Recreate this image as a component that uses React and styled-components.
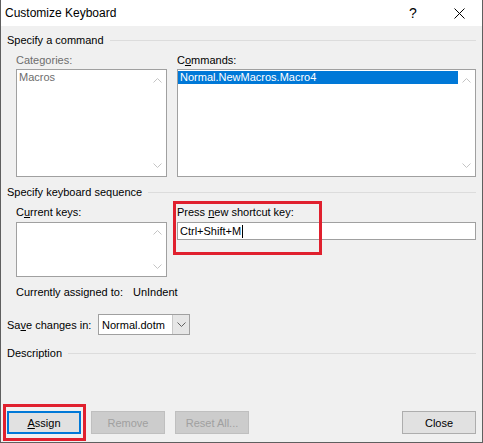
import styled, { createGlobalStyle } from "styled-components";

const GlobalStyle = createGlobalStyle`
  body {
    margin: 0;
    background: #ffffff;
  }
`;

const Window = styled.div`
  width: 483px;
  height: 443px;
  box-sizing: border-box;
  border: 1px solid #5f5f5f;
  border-top: none;
  display: flex;
  flex-direction: column;
  background: #f0f0f0;
  font-family: "Liberation Sans", Arial, sans-serif;
  font-size: 11px;
  color: #000;
`;

const TitleBar = styled.div`
  height: 26px;
  flex: none;
  display: flex;
  align-items: center;
  background: #ffffff;
  padding-left: 4px;
  font-size: 12px;
`;

const Title = styled.span`
  flex: 1;
`;

const TitleButton = styled.div`
  width: 46px;
  height: 26px;
  display: flex;
  align-items: center;
  justify-content: center;
  font-size: 14px;
`;

const Body = styled.div`
  flex: 1;
  display: flex;
  flex-direction: column;
  padding: 0 6px 8px 6px;
`;

const GroupHeader = styled.div`
  display: flex;
  align-items: center;
  gap: 6px;
  height: 14px;
  line-height: 14px;
  margin-top: ${({ $top }) => $top}px;
  &::after {
    content: "";
    flex: 1;
    border-top: 1px solid #dcdcdc;
  }
`;

const FieldGrid = styled.div`
  display: grid;
  grid-template-columns: 151px 1fr;
  column-gap: 10px;
  padding-left: 9px;
  margin-top: ${({ $top }) => $top}px;
`;

const Field = styled.div`
  position: relative;
  display: flex;
  flex-direction: column;
`;

const Label = styled.div`
  height: 14px;
  line-height: 14px;
  margin-bottom: ${({ $gap }) => $gap}px;
  color: ${({ $disabled }) => ($disabled ? "#6d6d6d" : "#000")};
`;

const U = styled.span`
  text-decoration: underline;
`;

const ListBox = styled.div`
  height: ${({ $h }) => $h}px;
  box-sizing: border-box;
  border: 1px solid #a0a0a0;
  background: #ffffff;
  display: flex;
`;

const Items = styled.div`
  flex: 1;
  padding-top: 1px;
`;

const Item = styled.div`
  height: 13px;
  line-height: 13px;
  padding-left: 2px;
  background: ${({ $selected }) => ($selected ? "#0078d7" : "transparent")};
  color: ${({ $selected, $disabled }) =>
    $selected ? "#fff" : $disabled ? "#6d6d6d" : "#000"};
`;

const ScrollBar = styled.div`
  width: 17px;
  display: flex;
  flex-direction: column;
  justify-content: space-between;
  align-items: center;
  padding: ${({ $pad }) => $pad}px 0;
`;

const TextInput = styled.div`
  height: 18px;
  box-sizing: border-box;
  border: 1px solid #a0a0a0;
  background: #ffffff;
  display: flex;
  align-items: center;
  padding-left: 2px;
`;

const Caret = styled.span`
  display: inline-block;
  width: 1px;
  height: 13px;
  background: #000;
  margin-left: 1px;
`;

const Highlight = styled.div`
  position: absolute;
  top: ${({ $top }) => $top}px;
  left: ${({ $left }) => $left}px;
  width: ${({ $w }) => $w}px;
  height: ${({ $h }) => $h}px;
  box-sizing: border-box;
  border: 3px solid #e0202e;
  pointer-events: none;
`;

const InfoRow = styled.div`
  display: flex;
  gap: 10px;
  height: 14px;
  line-height: 14px;
  padding-left: 9px;
  margin-top: 8px;
`;

const SaveRow = styled.div`
  display: flex;
  align-items: center;
  margin-top: 15px;
`;

const SaveLabel = styled.span`
  width: 91px;
`;

const Select = styled.div`
  width: 92px;
  height: 21px;
  box-sizing: border-box;
  border: 1px solid #a0a0a0;
  background: #ffffff;
  display: flex;
  align-items: stretch;
`;

const SelectValue = styled.span`
  flex: 1;
  display: flex;
  align-items: center;
  padding-left: 3px;
`;

const SelectDrop = styled.span`
  width: 16px;
  display: flex;
  align-items: center;
  justify-content: center;
  background: #e6e6e6;
  border-left: 1px solid #c8c8c8;
`;

const ButtonRow = styled.div`
  margin-top: auto;
  display: flex;
  gap: 10px;
`;

const ButtonSlot = styled.div`
  position: relative;
  margin-left: ${({ $push }) => ($push ? "auto" : "0")};
`;

const Button = styled.button`
  width: 74px;
  height: 23px;
  box-sizing: border-box;
  padding: 0;
  font: inherit;
  background: ${({ disabled }) => (disabled ? "#cccccc" : "#e1e1e1")};
  color: ${({ disabled }) => (disabled ? "#a0a0a0" : "#000")};
  border: ${({ $focused, disabled }) =>
    $focused
      ? "2px solid #0078d7"
      : disabled
      ? "1px solid #bfbfbf"
      : "1px solid #adadad"};
`;

const Chevron = ({ dir = "up", color = "#c4c4c4" }) => (
  <svg width="9" height="5" viewBox="0 0 9 5">
    <polyline
      points={dir === "up" ? "0.5,4.5 4.5,0.5 8.5,4.5" : "0.5,0.5 4.5,4.5 8.5,0.5"}
      fill="none"
      stroke={color}
      strokeWidth="1"
    />
  </svg>
);

const CloseIcon = () => (
  <svg width="11" height="11" viewBox="0 0 11 11">
    <path d="M0.5 0.5 L10.5 10.5 M10.5 0.5 L0.5 10.5" stroke="#000" strokeWidth="1" />
  </svg>
);

export default function App() {
  return (
    <>
      <GlobalStyle />
      <Window>
        <TitleBar>
          <Title>Customize Keyboard</Title>
          <TitleButton>?</TitleButton>
          <TitleButton>
            <CloseIcon />
          </TitleButton>
        </TitleBar>
        <Body>
          <GroupHeader $top={7}>Specify a command</GroupHeader>
          <FieldGrid $top={6}>
            <Field>
              <Label $gap={2} $disabled>Categories:</Label>
              <ListBox $h={108}>
                <Items>
                  <Item $disabled>Macros</Item>
                </Items>
                <ScrollBar $pad={8}>
                  <Chevron dir="up" />
                  <Chevron dir="down" />
                </ScrollBar>
              </ListBox>
            </Field>
            <Field>
              <Label $gap={2}>
                C<U>o</U>mmands:
              </Label>
              <ListBox $h={108}>
                <Items>
                  <Item $selected>Normal.NewMacros.Macro4</Item>
                </Items>
                <ScrollBar $pad={8}>
                  <Chevron dir="up" />
                  <Chevron dir="down" />
                </ScrollBar>
              </ListBox>
            </Field>
          </FieldGrid>

          <GroupHeader $top={8}>Specify keyboard sequence</GroupHeader>
          <FieldGrid $top={6}>
            <Field>
              <Label $gap={3}>
                C<U>u</U>rrent keys:
              </Label>
              <ListBox $h={55}>
                <Items />
                <ScrollBar $pad={7}>
                  <Chevron dir="up" />
                  <Chevron dir="down" />
                </ScrollBar>
              </ListBox>
            </Field>
            <Field>
              <Label $gap={3}>
                Press <U>n</U>ew shortcut key:
              </Label>
              <TextInput>
                Ctrl+Shift+M
                <Caret />
              </TextInput>
              <Highlight $top={-4} $left={-4} $w={149} $h={54} />
            </Field>
          </FieldGrid>

          <InfoRow>
            <span>Currently assigned to:</span>
            <span>UnIndent</span>
          </InfoRow>

          <SaveRow>
            <SaveLabel>
              Sa<U>v</U>e changes in:
            </SaveLabel>
            <Select>
              <SelectValue>Normal.dotm</SelectValue>
              <SelectDrop>
                <Chevron dir="down" color="#606060" />
              </SelectDrop>
            </Select>
          </SaveRow>

          <GroupHeader $top={11}>Description</GroupHeader>

          <ButtonRow>
            <ButtonSlot>
              <Button $focused>
                <U>A</U>ssign
              </Button>
              <Highlight $top={-7} $left={-4} $w={83} $h={37} />
            </ButtonSlot>
            <ButtonSlot>
              <Button disabled>Remove</Button>
            </ButtonSlot>
            <ButtonSlot>
              <Button disabled>Reset All...</Button>
            </ButtonSlot>
            <ButtonSlot $push>
              <Button>Close</Button>
            </ButtonSlot>
          </ButtonRow>
        </Body>
      </Window>
    </>
  );
}
